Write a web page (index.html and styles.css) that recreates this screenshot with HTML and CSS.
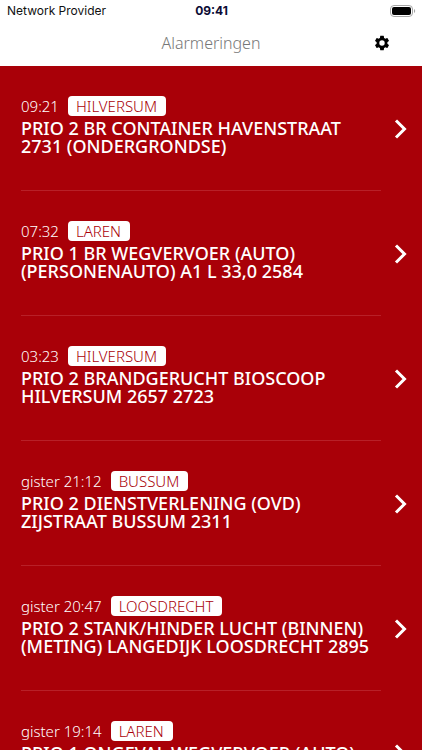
FILE: index.html
```html
<!DOCTYPE html>
<html lang="nl">
<head>
    <meta charset="UTF-8">
    <meta name="viewport" content="width=device-width, initial-scale=1.0">
    <title>Alarmeringen</title>
    <link rel="stylesheet" href="styles.css">
</head>
<body>

<header>
    <div class="status-bar">
        <span class="provider">Network Provider</span>
        <span class="clock">09:41</span>
        <svg class="battery" width="26" height="12" viewBox="0 0 26 12">
            <rect x="0.5" y="0.5" width="22" height="11" rx="3.5" fill="#fff" stroke="#a6a6a6"/>
            <rect x="2" y="2" width="19" height="8" rx="2" fill="#000"/>
            <path d="M24 4v4c1.600-.6 1.600-3.400 0-4z" fill="#a6a6a6"/>
        </svg>
    </div>
    <div class="nav-bar">
        <h1>Alarmeringen</h1>
        <button type="button" class="settings" aria-label="Instellingen">
            <svg width="18" height="18" viewBox="0 0 24 24" fill="#000">
                <path d="M19.140 12.940c.04-.3.060-.610.060-.940s-.020-.640-.070-.940l2.030-1.580a.49.49 0 0 0 .120-.610l-1.920-3.320a.488.488 0 0 0-.590-.220l-2.390.960c-.5-.380-1.030-.7-1.620-.940L14.400 2.810a.484.484 0 0 0-.480-.410h-3.840c-.240 0-.430.170-.470.410L9.250 5.350c-.590.240-1.130.570-1.620.940l-2.390-.960a.477.477 0 0 0-.590.220L2.740 8.870c-.120.210-.080.470.120.610l2.030 1.580c-.050.3-.090.630-.090.940s.020.640.070.940l-2.030 1.580a.49.49 0 0 0-.120.610l1.920 3.320c.120.220.370.290.590.220l2.390-.960c.5.380 1.030.7 1.620.940l.360 2.540c.050.240.240.410.480.410h3.840c.240 0 .440-.170.470-.410l.360-2.540c.590-.240 1.130-.560 1.620-.940l2.390.960c.220.080.470 0 .590-.220l1.920-3.320a.477.477 0 0 0-.120-.610l-2.010-1.580zM12 15.600A3.600 3.600 0 1 1 12 8.400a3.600 3.600 0 0 1 0 7.200z"/>
            </svg>
        </button>
    </div>
</header>

<ul class="alarms">
    <li>
        <a href="#" class="alarm">
            <div class="info">
                <div class="meta"><time>09:21</time><span class="place">HILVERSUM</span></div>
                <h2>PRIO 2 BR CONTAINER HAVENSTRAAT 2731 (ONDERGRONDSE)</h2>
            </div>
            <svg class="arrow" viewBox="0 0 14 20"><path d="M2 1.500l8.500 8.500L2 18.500"/></svg>
        </a>
    </li>
    <li>
        <a href="#" class="alarm">
            <div class="info">
                <div class="meta"><time>07:32</time><span class="place">LAREN</span></div>
                <h2>PRIO 1 BR WEGVERVOER (AUTO) (PERSONENAUTO) A1 L 33,0 2584</h2>
            </div>
            <svg class="arrow" viewBox="0 0 14 20"><path d="M2 1.500l8.500 8.500L2 18.500"/></svg>
        </a>
    </li>
    <li>
        <a href="#" class="alarm">
            <div class="info">
                <div class="meta"><time>03:23</time><span class="place">HILVERSUM</span></div>
                <h2>PRIO 2 BRANDGERUCHT BIOSCOOP HILVERSUM 2657 2723</h2>
            </div>
            <svg class="arrow" viewBox="0 0 14 20"><path d="M2 1.500l8.500 8.500L2 18.500"/></svg>
        </a>
    </li>
    <li>
        <a href="#" class="alarm">
            <div class="info">
                <div class="meta"><time>gister 21:12</time><span class="place">BUSSUM</span></div>
                <h2>PRIO 2 DIENSTVERLENING (OVD) ZIJSTRAAT BUSSUM 2311</h2>
            </div>
            <svg class="arrow" viewBox="0 0 14 20"><path d="M2 1.500l8.500 8.500L2 18.500"/></svg>
        </a>
    </li>
    <li>
        <a href="#" class="alarm">
            <div class="info">
                <div class="meta"><time>gister 20:47</time><span class="place">LOOSDRECHT</span></div>
                <h2>PRIO 2 STANK/HINDER LUCHT (BINNEN) (METING) LANGEDIJK LOOSDRECHT 2895</h2>
            </div>
            <svg class="arrow" viewBox="0 0 14 20"><path d="M2 1.500l8.500 8.500L2 18.500"/></svg>
        </a>
    </li>
    <li>
        <a href="#" class="alarm">
            <div class="info">
                <div class="meta"><time>gister 19:14</time><span class="place">LAREN</span></div>
                <h2>PRIO 1 ONGEVAL WEGVERVOER (AUTO)</h2>
            </div>
            <svg class="arrow" viewBox="0 0 14 20"><path d="M2 1.500l8.500 8.500L2 18.500"/></svg>
        </a>
    </li>
</ul>

</body>
</html>
```

FILE: styles.css
```css
* {
    box-sizing: border-box;
    margin: 0;
    padding: 0;
}
body {
    display: flex;
    flex-direction: column;
    height: 100vh;
    background: #a90008;
    font-family: "Noto Sans", "Open Sans", sans-serif;
}
header {
    flex: none;
    background: white;
}
.status-bar {
    display: grid;
    grid-template-columns: 1fr auto 1fr;
    align-items: center;
    height: 21px;
    padding: 0 6px 0 7px;
    font-family: Inter, sans-serif;
    font-size: 12px;
    color: #111;
}
.clock {
    font-weight: 700;
    color: #0b0b35;
}
.battery {
    justify-self: end;
}
.nav-bar {
    display: grid;
    grid-template-columns: 1fr auto 1fr;
    align-items: center;
    height: 45px;
    padding: 0 31px 2px;
}
.nav-bar h1 {
    grid-column: 2;
    font-size: 16px;
    font-weight: 300;
    color: #777;
}
.settings {
    display: flex;
    justify-self: end;
    border: none;
    background: none;
    cursor: pointer;
}
.alarms {
    flex: 1;
    overflow: hidden;
    list-style: none;
}
.alarm {
    display: flex;
    align-items: center;
    padding-left: 21px;
    color: white;
    text-decoration: none;
}
.info {
    flex: 1;
    min-height: 125px;
    padding: 30px 0 35px;
    border-bottom: 1px solid #b82028;
}
.meta {
    display: flex;
    align-items: center;
    gap: 9px;
    height: 20px;
    margin-bottom: 3px;
    font-size: 15px;
    font-weight: 300;
}
.place {
    padding: 0 9px 0 8px;
    border-radius: 4px;
    background: white;
    color: #a90008;
    line-height: 20px;
}
.alarm h2 {
    font-size: 18px;
    font-weight: 500;
    line-height: 18px;
}
.arrow {
    flex: none;
    width: 14px;
    height: 20px;
    margin: 0 14px 0 13px;
    fill: none;
    stroke: white;
    stroke-width: 3;
}
```
